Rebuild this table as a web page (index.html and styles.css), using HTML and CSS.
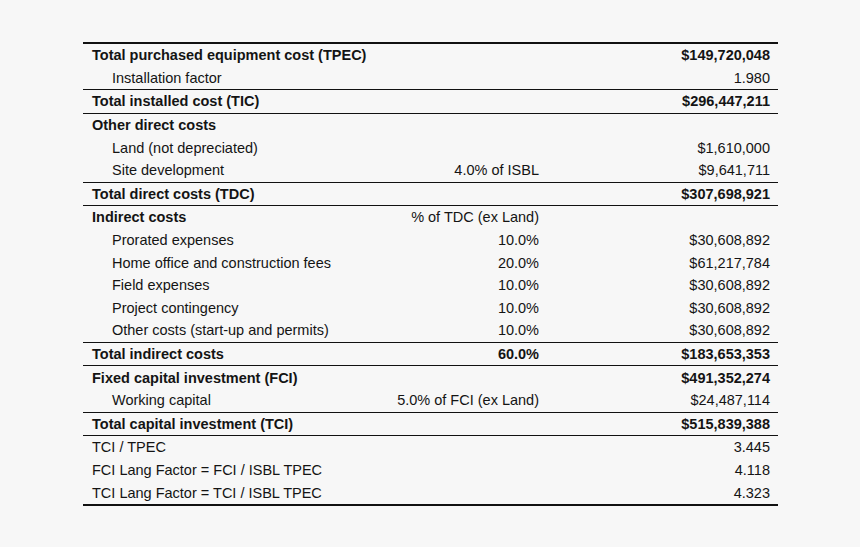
FILE: index.html
```html
<!DOCTYPE html>
<html>
<head>
<meta charset="utf-8">
<link rel="stylesheet" href="styles.css">
</head>
<body>
<div class="page">
<table class="cost">
  <colgroup><col class="c1"><col class="c2"><col class="c3"></colgroup>
  <tbody>
    <tr class="b"><td>Total purchased equipment cost (TPEC)</td><td></td><td class="num">$149,720,048</td></tr>
    <tr class="sep"><td class="ind">Installation factor</td><td></td><td class="num">1.980</td></tr>
    <tr class="b sep"><td>Total installed cost (TIC)</td><td></td><td class="num">$296,447,211</td></tr>
    <tr class="b"><td>Other direct costs</td><td></td><td></td></tr>
    <tr><td class="ind">Land (not depreciated)</td><td></td><td class="num">$1,610,000</td></tr>
    <tr class="sep"><td class="ind">Site development</td><td class="num">4.0% of ISBL</td><td class="num">$9,641,711</td></tr>
    <tr class="b sep"><td>Total direct costs (TDC)</td><td></td><td class="num">$307,698,921</td></tr>
    <tr><td class="bold">Indirect costs</td><td class="num">% of TDC (ex Land)</td><td></td></tr>
    <tr><td class="ind">Prorated expenses</td><td class="num">10.0%</td><td class="num">$30,608,892</td></tr>
    <tr><td class="ind">Home office and construction fees</td><td class="num">20.0%</td><td class="num">$61,217,784</td></tr>
    <tr><td class="ind">Field expenses</td><td class="num">10.0%</td><td class="num">$30,608,892</td></tr>
    <tr><td class="ind">Project contingency</td><td class="num">10.0%</td><td class="num">$30,608,892</td></tr>
    <tr class="sep"><td class="ind">Other costs (start-up and permits)</td><td class="num">10.0%</td><td class="num">$30,608,892</td></tr>
    <tr class="b sep"><td>Total indirect costs</td><td class="num">60.0%</td><td class="num">$183,653,353</td></tr>
    <tr class="b"><td>Fixed capital investment (FCI)</td><td></td><td class="num">$491,352,274</td></tr>
    <tr class="sep"><td class="ind">Working capital</td><td class="num">5.0% of FCI (ex Land)</td><td class="num">$24,487,114</td></tr>
    <tr class="b sep"><td>Total capital investment (TCI)</td><td></td><td class="num">$515,839,388</td></tr>
    <tr><td>TCI / TPEC</td><td></td><td class="num">3.445</td></tr>
    <tr><td>FCI Lang Factor = FCI / ISBL TPEC</td><td></td><td class="num">4.118</td></tr>
    <tr><td>TCI Lang Factor = TCI / ISBL TPEC</td><td></td><td class="num">4.323</td></tr>
  </tbody>
</table>
</div>
</body>
</html>
```
FILE: styles.css
```css
html, body {
  margin: 0;
  padding: 0;
  background: #f7f7f7;
}
.page {
  padding: 42px 0 0 83px;
}
.cost {
  width: 695px;
  border-collapse: collapse;
  table-layout: fixed;
  font-family: "Liberation Sans", Arial, sans-serif;
  font-size: 14.5px;
  color: #141414;
  border-top: 2px solid #111;
  border-bottom: 2px solid #111;
}
.c1 { width: 300px; }
.c2 { width: 164px; }
.c3 { width: 231px; }
.cost td {
  height: 22.6px;
  padding: 0 8px 0 9px;
  line-height: 16px;
  white-space: nowrap;
  vertical-align: middle;
}
.cost td.ind { padding-left: 29px; }
.cost td.num { text-align: right; }
.cost tr.b td, .cost td.bold { font-weight: bold; }
.cost tr.sep td { border-bottom: 1px solid #111; }
```
